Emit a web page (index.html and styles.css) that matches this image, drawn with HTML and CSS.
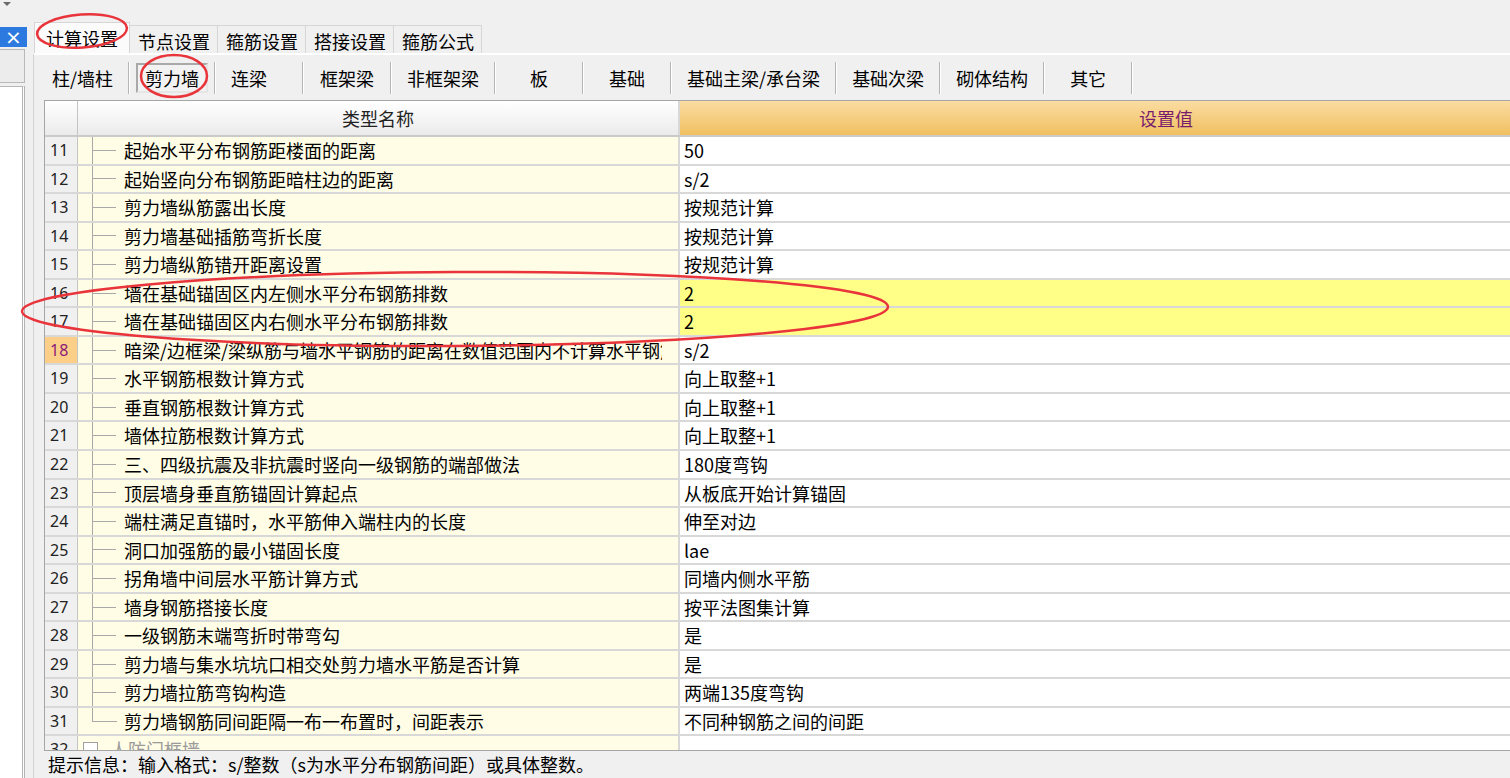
FILE: index.html
```html
<!DOCTYPE html>
<html lang="zh-CN">
<head>
<meta charset="utf-8">
<title>计算设置</title>
<link rel="stylesheet" href="styles.css">
</head>
<body>
<div class="app">
  <aside class="side">
    <div class="side-arrow"><svg width="10" height="8" viewBox="0 0 10 8"><path d="M1 2 L9 2 L5 6 Z" fill="#6b6b6b"/></svg></div>
    <div class="side-close">×</div>
    <div class="side-head"></div>
    <div class="side-list"></div>
  </aside>
  <main class="main">
    <div class="tabs">
      <div class="tab active">计算设置</div>
      <div class="tab">节点设置</div>
      <div class="tab">箍筋设置</div>
      <div class="tab">搭接设置</div>
      <div class="tab">箍筋公式</div>
    </div>
    <div class="panel">
      <div class="subtabs">
        <div class="sub">柱/墙柱</div><div class="sep"></div>
        <div class="sub active"><span class="pressed">剪力墙</span></div><div class="sep"></div>
        <div class="sub start">连梁</div><div class="sep"></div>
        <div class="sub">框架梁</div><div class="sep"></div>
        <div class="sub">非框架梁</div><div class="sep"></div>
        <div class="sub">板</div><div class="sep"></div>
        <div class="sub">基础</div><div class="sep"></div>
        <div class="sub">基础主梁/承台梁</div><div class="sep"></div>
        <div class="sub">基础次梁</div><div class="sep"></div>
        <div class="sub">砌体结构</div><div class="sep"></div>
        <div class="sub">其它</div><div class="sep"></div>
      </div>
      <div class="grid">
        <div class="row head">
          <div class="c-num"></div>
          <div class="c-name">类型名称</div>
          <div class="c-val">设置值</div>
        </div>
        <div class="row"><div class="c-num">11</div><div class="c-name"><span class="tree"></span><span class="txt">起始水平分布钢筋距楼面的距离</span></div><div class="c-val">50</div></div>
        <div class="row"><div class="c-num">12</div><div class="c-name"><span class="tree"></span><span class="txt">起始竖向分布钢筋距暗柱边的距离</span></div><div class="c-val">s/2</div></div>
        <div class="row"><div class="c-num">13</div><div class="c-name"><span class="tree"></span><span class="txt">剪力墙纵筋露出长度</span></div><div class="c-val">按规范计算</div></div>
        <div class="row"><div class="c-num">14</div><div class="c-name"><span class="tree"></span><span class="txt">剪力墙基础插筋弯折长度</span></div><div class="c-val">按规范计算</div></div>
        <div class="row"><div class="c-num">15</div><div class="c-name"><span class="tree"></span><span class="txt">剪力墙纵筋错开距离设置</span></div><div class="c-val">按规范计算</div></div>
        <div class="row"><div class="c-num">16</div><div class="c-name"><span class="tree"></span><span class="txt">墙在基础锚固区内左侧水平分布钢筋排数</span></div><div class="c-val mark">2</div></div>
        <div class="row"><div class="c-num">17</div><div class="c-name"><span class="tree"></span><span class="txt">墙在基础锚固区内右侧水平分布钢筋排数</span></div><div class="c-val mark">2</div></div>
        <div class="row"><div class="c-num current">18</div><div class="c-name"><span class="tree"></span><span class="txt">暗梁/边框梁/梁纵筋与墙水平钢筋的距离在数值范围内不计算水平钢筋</span></div><div class="c-val">s/2</div></div>
        <div class="row"><div class="c-num">19</div><div class="c-name"><span class="tree"></span><span class="txt">水平钢筋根数计算方式</span></div><div class="c-val">向上取整+1</div></div>
        <div class="row"><div class="c-num">20</div><div class="c-name"><span class="tree"></span><span class="txt">垂直钢筋根数计算方式</span></div><div class="c-val">向上取整+1</div></div>
        <div class="row"><div class="c-num">21</div><div class="c-name"><span class="tree"></span><span class="txt">墙体拉筋根数计算方式</span></div><div class="c-val">向上取整+1</div></div>
        <div class="row"><div class="c-num">22</div><div class="c-name"><span class="tree"></span><span class="txt">三、四级抗震及非抗震时竖向一级钢筋的端部做法</span></div><div class="c-val">180度弯钩</div></div>
        <div class="row"><div class="c-num">23</div><div class="c-name"><span class="tree"></span><span class="txt">顶层墙身垂直筋锚固计算起点</span></div><div class="c-val">从板底开始计算锚固</div></div>
        <div class="row"><div class="c-num">24</div><div class="c-name"><span class="tree"></span><span class="txt">端柱满足直锚时，水平筋伸入端柱内的长度</span></div><div class="c-val">伸至对边</div></div>
        <div class="row"><div class="c-num">25</div><div class="c-name"><span class="tree"></span><span class="txt">洞口加强筋的最小锚固长度</span></div><div class="c-val">lae</div></div>
        <div class="row"><div class="c-num">26</div><div class="c-name"><span class="tree"></span><span class="txt">拐角墙中间层水平筋计算方式</span></div><div class="c-val">同墙内侧水平筋</div></div>
        <div class="row"><div class="c-num">27</div><div class="c-name"><span class="tree"></span><span class="txt">墙身钢筋搭接长度</span></div><div class="c-val">按平法图集计算</div></div>
        <div class="row"><div class="c-num">28</div><div class="c-name"><span class="tree"></span><span class="txt">一级钢筋末端弯折时带弯勾</span></div><div class="c-val">是</div></div>
        <div class="row"><div class="c-num">29</div><div class="c-name"><span class="tree"></span><span class="txt">剪力墙与集水坑坑口相交处剪力墙水平筋是否计算</span></div><div class="c-val">是</div></div>
        <div class="row"><div class="c-num">30</div><div class="c-name"><span class="tree"></span><span class="txt">剪力墙拉筋弯钩构造</span></div><div class="c-val">两端135度弯钩</div></div>
        <div class="row"><div class="c-num">31</div><div class="c-name"><span class="tree last"></span><span class="txt">剪力墙钢筋同间距隔一布一布置时，间距表示</span></div><div class="c-val">不同种钢筋之间的间距</div></div>
        <div class="row partial"><div class="c-num">32</div><div class="c-name"><span class="box"></span><span class="group">人防门框墙</span></div><div class="c-val"></div></div>
      </div>
      <div class="status">提示信息：输入格式：s/整数（s为水平分布钢筋间距）或具体整数。</div>
    </div>
  </main>
  <svg class="marks" width="1510" height="778" viewBox="0 0 1510 778">
    <ellipse cx="82" cy="31" rx="45" ry="16.5" transform="rotate(-4 82 31)"/>
    <ellipse cx="174" cy="76" rx="33" ry="21"/>
    <ellipse cx="455" cy="309" rx="433" ry="37" transform="rotate(-0.3 455 309)"/>
  </svg>
</div>
</body>
</html>
```
FILE: styles.css
```css
* { box-sizing: border-box; }
html, body { margin: 0; padding: 0; }
body {
  background: #f0f0f0;
  font-family: "Noto Sans CJK SC", "Noto Sans", sans-serif;
  font-size: 18px;
  color: #000;
}
.app {
  position: relative;
  width: 1510px;
  height: 778px;
  display: flex;
  overflow: hidden;
}

/* left strip */
.side { flex: 0 0 27px; display: flex; flex-direction: column; }
.side-arrow { height: 27px; padding: 0 0 0 2px; line-height: 0; }
.side-close {
  height: 20px;
  background: #2c7ae0;
  color: #fff;
  display: flex;
  align-items: center;
  justify-content: center;
  font-family: "DejaVu Sans", sans-serif;
  font-size: 20px;
  line-height: 1;
}
.side-head {
  margin-top: 2px;
  height: 34px;
  width: 25px;
  background: #ececec;
  border: 1px solid #b8b8b8;
  border-left: none;
}
.side-list {
  margin-top: 3px;
  flex: 1;
  width: 25px;
  background: #fff;
  border-top: 1px solid #b8b8b8;
  border-right: 3px double #b4b4b4;
}

/* main */
.main {
  flex: 1;
  min-width: 0;
  margin-left: 6px;
  padding-top: 22px;
  display: flex;
  flex-direction: column;
}
.tabs { height: 31px; flex: 0 0 31px; display: flex; align-items: flex-end; padding-left: 1px; }
.tab {
  height: 28px;
  padding: 0 7px 0 8px;
  line-height: 30px;
  border: 1px solid #d6d6d6;
  border-left: none;
  border-bottom: none;
  background: #f0f0f0;
  white-space: nowrap;
}
.tab.active {
  height: 31px;
  padding: 0 11px;
  line-height: 30px;
  background: #fbfbfb;
  border-left: 1px solid #d6d6d6;
}

.panel {
  flex: 1;
  min-height: 0;
  display: flex;
  flex-direction: column;
  border-left: 1px solid #d2d2d2;
  border-top: 2px solid #fff;
}
.subtabs {
  flex: 0 0 45px;
  display: flex;
  align-items: center;
  padding-left: 3px;
}
.sub {
  height: 32px;
  min-width: 86px;
  padding: 0 15px;
  line-height: 32px;
  white-space: nowrap;
  display: flex;
  align-items: center;
  justify-content: center;
}
.sub.start { justify-content: flex-start; }
.sub.active { padding: 0 6px; min-width: 84px; }
.pressed {
  height: 30px;
  line-height: 26px;
  padding: 0 7px;
  border: 2px solid #a9a9a9;
  border-right-color: #e6e6e6;
  border-bottom-color: #e6e6e6;
  background: #f2f2f2;
}
.sep {
  width: 2px;
  height: 32px;
  border-left: 1px solid #b4b4b4;
  border-right: 1px solid #fff;
}

/* grid */
.grid {
  flex: 1;
  min-height: 0;
  margin-left: 10px;
  background: #fff;
  border-left: 1px solid #a6a6a6;
  border-top: 1px solid #a6a6a6;
  border-bottom: 1px solid #a6a6a6;
  overflow: hidden;
}
.row {
  display: flex;
  height: 28.55px;
  line-height: 26px;
  border-bottom: 2px solid #d8d8d8;
}
.row.partial { height: 14px; line-height: 26px; overflow: hidden; border-bottom: none; }
.c-num {
  flex: 0 0 33px;
  padding-left: 5px;
  background: #f0f0f0;
  border-right: 1px solid #c4c4c4;
  font-family: "Noto Sans", sans-serif;
  font-size: 16px;
  color: #222;
}
.c-num.current { background: #fbcf88; color: #8a1a78; }
.c-name {
  flex: 0 0 602px;
  display: flex;
  white-space: nowrap;
  overflow: hidden;
  background: #fffde6;
  border-right: 2px solid #d8d8d8;
}
.txt { flex: 0 1 auto; max-width: 538px; overflow: hidden; }
.c-val {
  flex: 0 0 972px;
  padding-left: 4px;
  white-space: nowrap;
}
.c-val.mark { background: #ffff88; }

.tree {
  flex: 0 0 46px;
  height: 100%;
  background:
    linear-gradient(#a8a8a8, #a8a8a8) 14px 0 / 1px 100% no-repeat,
    linear-gradient(#a8a8a8, #a8a8a8) 14px 50% / 24px 1px no-repeat;
}
.tree.last {
  background:
    linear-gradient(#a8a8a8, #a8a8a8) 14px 0 / 1px 50% no-repeat,
    linear-gradient(#a8a8a8, #a8a8a8) 14px 50% / 25px 1px no-repeat;
}
.box {
  flex: 0 0 15px;
  height: 15px;
  margin: 6px 0 0 5px;
  border: 1px solid #a0a0a0;
  background: #fff;
}
.group { margin-left: 12px; color: #9a9a9a; }

/* header */
.row.head { height: 36px; line-height: 34px; border-bottom: 2px solid #cacaca; }
.head .c-num { background: linear-gradient(#ffffff, #ebebeb); }
.head .c-name {
  justify-content: center;
  background: linear-gradient(#ffffff, #ebebeb);
  color: #222;
}
.head .c-val {
  text-align: center;
  padding-left: 0;
  background: linear-gradient(#fadca2, #f0c060);
  color: #7a1c6c;
}

.status {
  flex: 0 0 27px;
  padding-left: 14px;
  line-height: 27px;
  white-space: nowrap;
}

/* annotation overlay */
.marks {
  position: absolute;
  left: 0;
  top: 0;
  pointer-events: none;
  fill: none;
  stroke: #e8343a;
  stroke-width: 2.5;
}
```
